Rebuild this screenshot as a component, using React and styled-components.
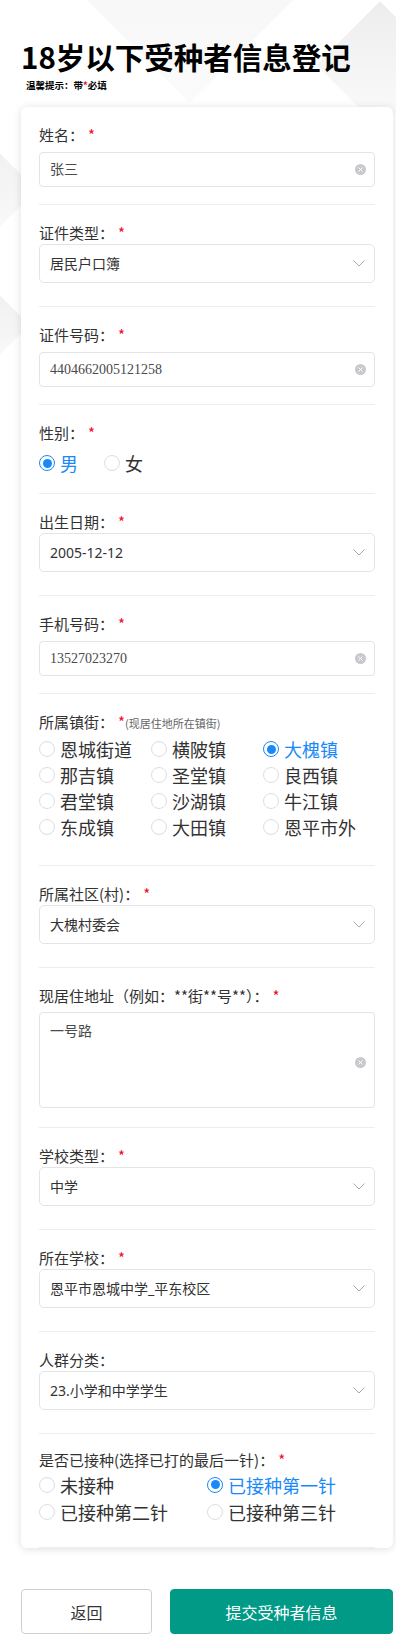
import styled, { createGlobalStyle } from 'styled-components';

const GlobalStyle = createGlobalStyle`
  body {
    margin: 0;
    background: #ffffff;
    font-family: "Noto Sans CJK SC", "Noto Sans", sans-serif;
    color: #323233;
  }
`;

const Page = styled.div`
  position: relative;
  overflow: hidden;
  min-height: 1645px;
  box-sizing: border-box;
  padding: 39px 3px 11px 21px;
`;

const Diamond = styled.div`
  position: absolute;
  top: ${(p) => p.$top}px;
  left: ${(p) => p.$left}px;
  width: ${(p) => p.$size}px;
  height: ${(p) => p.$size}px;
  transform: rotate(45deg);
  background: linear-gradient(135deg, ${(p) => p.$shade} 0%, #fbfbfb 100%);
  z-index: 0;
`;

const Content = styled.div`
  position: relative;
  z-index: 1;
`;

const Title = styled.h1`
  margin: 0;
  font-size: 29.5px;
  line-height: 34px;
  font-weight: 700;
  color: #000;
`;

const Tip = styled.div`
  margin: 6px 0 0 5px;
  font-size: 9.5px;
  line-height: 12px;
  font-weight: 700;
  color: #000;
`;

const Card = styled.div`
  margin-top: 16px;
  background: #fff;
  border-radius: 6px;
  box-shadow: 0 1px 9px rgba(0, 0, 0, 0.13);
  padding: 0 18px;
`;

const Field = styled.div`
  padding: ${(p) => p.$pt ?? 17}px 0 ${(p) => p.$pb}px;
  border-bottom: 1px solid #ebedf0;
`;

const Label = styled.div`
  font-size: 15px;
  line-height: 22px;
  color: #323233;
  display: flex;
  align-items: baseline;
`;

const Star = styled.span`
  color: #ee0a24;
  margin-left: 4px;
  font-size: 15px;
`;

const Hint = styled.span`
  font-size: 11px;
  color: #646566;
`;

const InputBox = styled.div`
  margin-top: ${(p) => p.$mt ?? 6}px;
  height: ${(p) => p.$h ?? 35}px;
  box-sizing: border-box;
  border: 1px solid #e3e4e6;
  border-radius: 4px;
  display: flex;
  align-items: ${(p) => (p.$area ? 'flex-start' : 'center')};
  justify-content: space-between;
  padding: 0 8px 0 10px;
`;

const InputText = styled.span`
  font-family: "Liberation Serif", "Noto Sans CJK SC", serif;
  font-size: 14px;
  color: #4a4a4a;
  line-height: 20px;
`;

const AreaText = styled.span`
  font-size: 14px;
  color: #4a4a4a;
  line-height: 20px;
  margin-top: 7px;
`;

const ClearDot = styled.span`
  width: 11px;
  height: 11px;
  border-radius: 50%;
  background: #c8c9cc;
  display: inline-flex;
  align-items: center;
  justify-content: center;
  margin-top: ${(p) => (p.$area ? '44px' : '0')};
`;

const SelectBox = styled.div`
  height: 39px;
  box-sizing: border-box;
  border: 1px solid #e3e4e6;
  border-radius: 5px;
  display: flex;
  align-items: center;
  justify-content: space-between;
  padding: 0 9px 0 10px;
`;

const SelectText = styled.span`
  font-family: "Noto Sans", "Noto Sans CJK SC", sans-serif;
  font-size: 14px;
  line-height: 20px;
  color: #323233;
`;

const RadioGroup = styled.div`
  margin-top: ${(p) => p.$mt}px;
  display: ${(p) => (p.$cols ? 'grid' : 'flex')};
  grid-template-columns: repeat(${(p) => p.$cols || 1}, 1fr);
  gap: ${(p) => (p.$cols ? '0' : '26px')};
`;

const RadioItem = styled.div`
  display: flex;
  align-items: center;
  height: ${(p) => p.$h}px;
  font-size: 18px;
  color: ${(p) => (p.$on ? '#1989fa' : '#323233')};
  white-space: nowrap;
`;

const Circle = styled.span`
  width: 16px;
  height: 16px;
  box-sizing: border-box;
  border-radius: 50%;
  border: 1px solid ${(p) => (p.$on ? '#1989fa' : '#dcdee0')};
  margin-right: 5px;
  display: inline-flex;
  align-items: center;
  justify-content: center;
  flex: none;

  &::after {
    content: '';
    display: ${(p) => (p.$on ? 'block' : 'none')};
    width: 9px;
    height: 9px;
    border-radius: 50%;
    background: #1989fa;
  }
`;

const Actions = styled.div`
  margin-top: 41px;
  display: grid;
  grid-template-columns: 131px 1fr;
  gap: 18px;
`;

const Button = styled.button`
  height: 45px;
  border-radius: 4px;
  font-family: "Noto Sans CJK SC", sans-serif;
  font-size: 16px;
  border: 1px solid ${(p) => (p.$primary ? '#009a87' : '#cfcfcf')};
  background: ${(p) => (p.$primary ? '#009a87' : '#fff')};
  color: ${(p) => (p.$primary ? '#fff' : '#333')};
  padding: 0;
`;

function Clear({ area }) {
  return (
    <ClearDot $area={area}>
      <svg width="5" height="5" viewBox="0 0 5 5">
        <path d="M0.5 0.5L4.5 4.5M4.5 0.5L0.5 4.5" stroke="#fff" strokeWidth="1" />
      </svg>
    </ClearDot>
  );
}

function Chevron() {
  return (
    <svg width="12" height="7" viewBox="0 0 12 7">
      <path d="M0.5 0.5L6 6L11.5 0.5" fill="none" stroke="#a8a9ab" strokeWidth="1" />
    </svg>
  );
}

function FieldLabel({ text, required = true, hint }) {
  return (
    <Label>
      {text}
      {required && <Star>*</Star>}
      {hint && <Hint>{hint}</Hint>}
    </Label>
  );
}

function TextField({ label, value }) {
  return (
    <Field $pb={17}>
      <FieldLabel text={label} />
      <InputBox>
        <InputText>{value}</InputText>
        <Clear />
      </InputBox>
    </Field>
  );
}

function SelectField({ label, value, required = true }) {
  return (
    <Field $pb={23}>
      <FieldLabel text={label} required={required} />
      <SelectBox>
        <SelectText>{value}</SelectText>
        <Chevron />
      </SelectBox>
    </Field>
  );
}

function Radio({ text, on, h }) {
  return (
    <RadioItem $on={on} $h={h}>
      <Circle $on={on} />
      {text}
    </RadioItem>
  );
}

const towns = [
  '恩城街道', '横陂镇', '大槐镇',
  '那吉镇', '圣堂镇', '良西镇',
  '君堂镇', '沙湖镇', '牛江镇',
  '东成镇', '大田镇', '恩平市外',
];

const doses = ['未接种', '已接种第一针', '已接种第二针', '已接种第三针'];

export default function App() {
  return (
    <>
      <GlobalStyle />
      <Page>
        <Diamond $top={-90} $left={110} $size={160} $shade="#f3f3f4" />
        <Diamond $top={20} $left={335} $size={90} $shade="#ededee" />
        <Diamond $top={150} $left={-60} $size={80} $shade="#efeff0" />
        <Diamond $top={290} $left={-55} $size={70} $shade="#eeeeef" />
        <Content>
          <Title>18岁以下受种者信息登记</Title>
          <Tip>
            温馨提示：带<span style={{ color: '#ee0a24' }}>*</span>必填
          </Tip>
          <Card>
            <TextField label="姓名：" value="张三" />
            <SelectField label="证件类型：" value="居民户口簿" />
            <TextField label="证件号码：" value="4404662005121258" />
            <Field $pb={17}>
              <FieldLabel text="性别：" />
              <RadioGroup $mt={6}>
                <Radio text="男" on h={26} />
                <Radio text="女" h={26} />
              </RadioGroup>
            </Field>
            <SelectField label="出生日期：" value="2005-12-12" />
            <TextField label="手机号码：" value="13527023270" />
            <Field $pb={25}>
              <FieldLabel text="所属镇街：" hint="(现居住地所在镇街)" />
              <RadioGroup $mt={2} $cols={3}>
                {towns.map((t) => (
                  <Radio key={t} text={t} on={t === '大槐镇'} h={26} />
                ))}
              </RadioGroup>
            </Field>
            <SelectField label="所属社区(村)：" value="大槐村委会" />
            <Field $pb={19}>
              <FieldLabel text="现居住地址（例如：**街**号**）：" />
              <InputBox $mt={5} $h={96} $area>
                <AreaText>一号路</AreaText>
                <Clear area />
              </InputBox>
            </Field>
            <SelectField label="学校类型：" value="中学" />
            <SelectField label="所在学校：" value="恩平市恩城中学_平东校区" />
            <SelectField label="人群分类：" value="23.小学和中学学生" required={false} />
            <Field $pt={15} $pb={22}>
              <FieldLabel text="是否已接种(选择已打的最后一针)：" />
              <RadioGroup $mt={0} $cols={2}>
                {doses.map((d) => (
                  <Radio key={d} text={d} on={d === '已接种第一针'} h={27} />
                ))}
              </RadioGroup>
            </Field>
          </Card>
          <Actions>
            <Button>返回</Button>
            <Button $primary>提交受种者信息</Button>
          </Actions>
        </Content>
      </Page>
    </>
  );
}
